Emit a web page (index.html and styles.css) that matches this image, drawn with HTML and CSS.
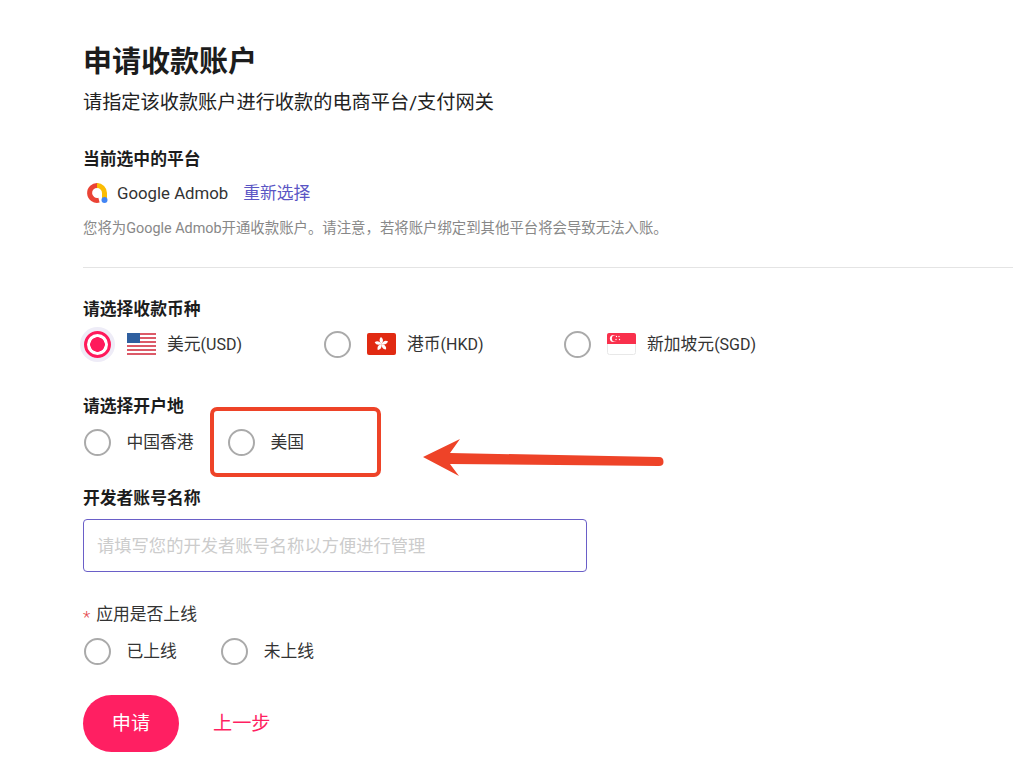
FILE: index.html
```html
<!DOCTYPE html>
<html lang="zh-CN">
<head>
    <meta charset="UTF-8">
    <meta name="viewport" content="width=device-width, initial-scale=1.0">
    <title>申请收款账户</title>
    <link rel="stylesheet" href="styles.css">
</head>
<body>
    <main class="page">
        <h1 class="title">申请收款账户</h1>
        <p class="subtitle">请指定该收款账户进行收款的电商平台/支付网关</p>

        <h3 class="label platform-label">当前选中的平台</h3>
        <div class="platform">
            <svg class="admob" width="22" height="22" viewBox="0 0 22 22">
                <path d="M12 3.5 A7.5 7.5 0 1 0 13 18.2" fill="none" stroke="#ea4335" stroke-width="5"/>
                <path d="M11 3.5 A7.5 7.5 0 0 1 18.5 11 V16" fill="none" stroke="#fbbc04" stroke-width="5"/>
                <circle cx="18.5" cy="18" r="3" fill="#4285f4"/>
            </svg>
            <span class="platform-name">Google Admob</span>
            <a class="link" href="#">重新选择</a>
        </div>
        <p class="note">您将为Google Admob开通收款账户。请注意，若将账户绑定到其他平台将会导致无法入账。</p>

        <hr class="divider">

        <h3 class="label">请选择收款币种</h3>
        <div class="radio-group currency">
            <label class="radio checked">
                <span class="dot"></span>
                <svg class="flag" width="29" height="22" viewBox="0 0 29 22">
                    <rect width="29" height="22" rx="2" fill="#fff"/>
                    <g fill="#dc5a68">
                        <rect y="0" width="29" height="2"/>
                        <rect y="4" width="29" height="2"/>
                        <rect y="8" width="29" height="2"/>
                        <rect y="12" width="29" height="2"/>
                        <rect y="16" width="29" height="2"/>
                        <rect y="20" width="29" height="2"/>
                    </g>
                    <rect width="13" height="10" fill="#2f5f9f"/>
                </svg>
                <span>美元<span class="code">(USD)</span></span>
            </label>
            <label class="radio">
                <span class="dot"></span>
                <svg class="flag" width="29" height="22" viewBox="0 0 29 22">
                    <rect width="29" height="22" rx="2" fill="#e12a12"/>
                    <g fill="#fff">
                        <path d="M14.5 11 C12.3 9 11.8 6 14 4 C16.4 5.5 16.6 8.5 14.5 11 Z"/>
                        <path d="M14.5 11 C12.3 9 11.8 6 14 4 C16.4 5.5 16.6 8.5 14.5 11 Z" transform="rotate(72 14.5 11)"/>
                        <path d="M14.5 11 C12.3 9 11.8 6 14 4 C16.4 5.5 16.6 8.5 14.5 11 Z" transform="rotate(144 14.5 11)"/>
                        <path d="M14.5 11 C12.3 9 11.8 6 14 4 C16.4 5.5 16.6 8.5 14.5 11 Z" transform="rotate(216 14.5 11)"/>
                        <path d="M14.5 11 C12.3 9 11.8 6 14 4 C16.4 5.5 16.6 8.5 14.5 11 Z" transform="rotate(288 14.5 11)"/>
                    </g>
                </svg>
                <span>港币<span class="code">(HKD)</span></span>
            </label>
            <label class="radio">
                <span class="dot"></span>
                <svg class="flag" width="29" height="22" viewBox="0 0 29 22">
                    <rect x=".5" y=".5" width="28" height="21" rx="2" fill="#fff" stroke="#e8e8e8"/>
                    <path d="M0 2a2 2 0 0 1 2-2h25a2 2 0 0 1 2 2v9H0z" fill="#f9304c"/>
                    <circle cx="6.5" cy="5.5" r="3.6" fill="#fff"/>
                    <circle cx="8.2" cy="5.5" r="3.3" fill="#f9304c"/>
                    <circle cx="9.5" cy="3.5" r=".7" fill="#fff"/>
                    <circle cx="12" cy="3.5" r=".7" fill="#fff"/>
                    <circle cx="9" cy="6.5" r=".7" fill="#fff"/>
                    <circle cx="12.5" cy="6.5" r=".7" fill="#fff"/>
                </svg>
                <span>新加坡元<span class="code">(SGD)</span></span>
            </label>
        </div>

        <h3 class="label region-label">请选择开户地</h3>
        <div class="radio-group region">
            <label class="radio">
                <span class="dot"></span>
                <span>中国香港</span>
            </label>
            <label class="radio">
                <span class="dot"></span>
                <span>美国</span>
            </label>
        </div>

        <h3 class="label name-label">开发者账号名称</h3>
        <input class="text-input" type="text" placeholder="请填写您的开发者账号名称以方便进行管理">

        <p class="field-label"><span class="star">*</span>应用是否上线</p>
        <div class="radio-group online">
            <label class="radio">
                <span class="dot"></span>
                <span>已上线</span>
            </label>
            <label class="radio">
                <span class="dot"></span>
                <span>未上线</span>
            </label>
        </div>

        <div class="actions">
            <button class="submit" type="button">申请</button>
            <a class="back" href="#">上一步</a>
        </div>

        <!-- red annotation drawn over the screenshot -->
        <div class="mark-box"></div>
        <svg class="mark-arrow" width="250" height="50" viewBox="0 0 250 50">
            <path d="M0 19 L37 1 L27 15 L236 19 Q240.5 19 240.5 24 Q240.5 28 236 28 L27 26 L36 38 Z" fill="#ee4328"/>
        </svg>
    </main>
</body>
</html>
```

FILE: styles.css
```css
* {
    box-sizing: border-box;
}
html, body {
    margin: 0;
    padding: 0;
}
body {
    font-family: Roboto, "Noto Sans CJK SC", sans-serif;
    color: #222;
    background: #fff;
}
.page {
    position: relative;
    height: 771px;
    overflow: hidden;
    padding: 42px 0 0 83px;
}
.title {
    margin: 0;
    font-size: 29px;
    line-height: 40px;
    font-weight: 700;
    color: #1c1c1c;
}
.subtitle {
    margin: 9px 0 0;
    font-size: 19.2px;
    line-height: 24px;
    color: #222;
}
.label {
    margin: 0;
    font-size: 16.8px;
    line-height: 24px;
    font-weight: 700;
    color: #1c1c1c;
}
.platform-label {
    margin-top: 32px;
}
.platform {
    display: flex;
    align-items: center;
    height: 24px;
    margin-top: 10px;
    font-size: 16.8px;
    line-height: 24px;
}
.admob {
    margin-left: 3px;
}
.platform-name {
    margin-left: 9px;
    color: #333;
}
.link {
    margin-left: 15px;
    color: #5a55c4;
    text-decoration: none;
}
.note {
    margin: 15px 0 0;
    font-size: 14.4px;
    line-height: 18px;
    color: #888;
}
.divider {
    height: 1px;
    margin: 29px 0 0;
    border: 0;
    background: #e4e4e4;
}
.divider + .label {
    margin-top: 29px;
}
.radio-group {
    display: flex;
    align-items: center;
    font-size: 16.8px;
    line-height: 24px;
    color: #333;
}
.radio {
    display: flex;
    align-items: center;
    height: 30px;
}
.dot {
    flex: none;
    width: 27px;
    height: 27px;
    margin: 0 15.4px 0 1px;
    border: 2px solid #aaa;
    border-radius: 50%;
    background: #fff;
}
.checked .dot {
    border: 3px solid #ff1a5c;
    box-shadow: 0 0 0 4px #eeecf7;
    background: radial-gradient(circle, #ff1a5c 0 7px, #fff 7.5px);
}
.flag {
    flex: none;
    margin: 0 11px 0 .6px;
}
.code {
    font-size: 16px;
}
.currency {
    margin-top: 8px;
}
.currency .radio {
    width: 240px;
}
.region-label {
    margin-top: 35px;
}
.region {
    margin-top: 9px;
}
.region .radio + .radio {
    margin-left: 33.6px;
}
.name-label {
    margin-top: 29px;
}
.text-input {
    display: block;
    width: 504px;
    height: 53px;
    margin-top: 9px;
    padding: 0 13px;
    border: 1px solid #6a5fc8;
    border-radius: 4px;
    outline: none;
    font-family: inherit;
    font-size: 17.3px;
}
.text-input::placeholder {
    color: #ccc;
}
.field-label {
    margin: 30px 0 0;
    font-size: 16.8px;
    line-height: 24px;
    color: #333;
}
.star {
    margin-right: 6px;
    color: #e5484d;
    font-size: 17px;
    font-weight: 300;
    vertical-align: -3px;
}
.online {
    margin-top: 7px;
}
.online .radio + .radio {
    margin-left: 43.6px;
}
.actions {
    display: flex;
    align-items: center;
    margin-top: 29px;
}
.submit {
    width: 96px;
    height: 57px;
    padding: 0 0 4px;
    border: none;
    border-radius: 29px;
    background: #ff1f62;
    color: #fff;
    font-family: inherit;
    font-size: 19.2px;
    cursor: pointer;
}
.back {
    margin-left: 34px;
    padding-bottom: 4px;
    color: #ff1f62;
    font-size: 19.2px;
    text-decoration: none;
}
.mark-box {
    position: absolute;
    left: 210px;
    top: 407px;
    width: 171px;
    height: 70px;
    border: 4px solid #ee4328;
    border-radius: 7px;
}
.mark-arrow {
    position: absolute;
    left: 423px;
    top: 438px;
}
```
